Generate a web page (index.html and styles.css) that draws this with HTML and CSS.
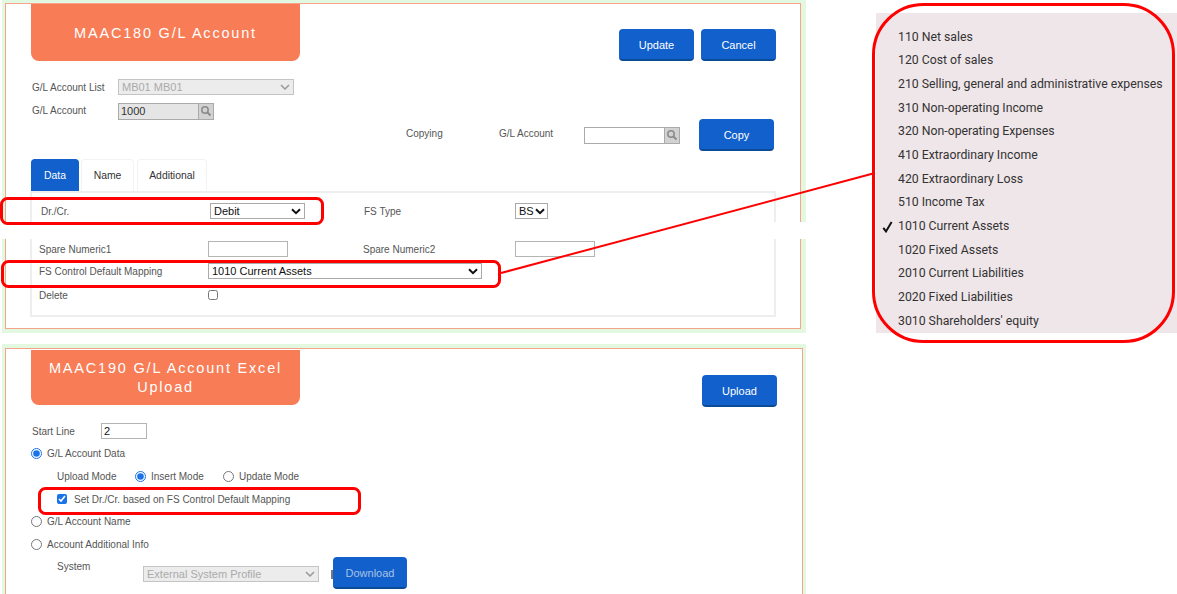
FILE: index.html
```html
<!DOCTYPE html>
<html lang="en">
<head>
    <meta charset="UTF-8">
    <meta name="viewport" content="width=device-width, initial-scale=1.0">
    <title>G/L Account screens</title>
    <link rel="stylesheet" href="styles.css">
</head>
<body>
    <div class="page">
        <div class="screens">
            <section class="screen screen-account">
                <div class="screen-inner">
                    <div class="head">
                        <h1 class="title">MAAC180 G/L Account</h1>
                        <div class="actions">
                            <button class="button">Update</button>
                            <button class="button">Cancel</button>
                        </div>
                    </div>
                    <div class="row row-list">
                        <label class="label label-list">G/L Account List</label>
                        <div class="select select-disabled select-list"><span>MB01 MB01</span>
                            <svg class="chevron" width="10" height="6" viewBox="0 0 10 6"><path d="M1 1l4 4 4-4" fill="none" stroke="#999" stroke-width="1.5"/></svg>
                        </div>
                    </div>
                    <div class="row row-account">
                        <label class="label label-list label-nudge">G/L Account</label>
                        <div class="lookup lookup-readonly">
                            <input class="lookup-input" type="text" value="1000">
                            <span class="lookup-button">
                                <svg width="12" height="12" viewBox="0 0 12 12"><circle cx="5" cy="5" r="3.2" fill="none" stroke="#8b8b8b" stroke-width="1.5"/><path d="M7.5 7.5l3 3" stroke="#8b8b8b" stroke-width="2"/></svg>
                            </span>
                        </div>
                    </div>
                    <div class="row row-copy">
                        <label class="label label-copying label-up">Copying</label>
                        <label class="label label-copy-account label-up">G/L Account</label>
                        <div class="lookup">
                            <input class="lookup-input" type="text">
                            <span class="lookup-button">
                                <svg width="12" height="12" viewBox="0 0 12 12"><circle cx="5" cy="5" r="3.2" fill="none" stroke="#8b8b8b" stroke-width="1.5"/><path d="M7.5 7.5l3 3" stroke="#8b8b8b" stroke-width="2"/></svg>
                            </span>
                        </div>
                        <button class="button button-copy">Copy</button>
                    </div>
                    <div class="tabs">
                        <span class="tab tab-active tab-data">Data</span>
                        <span class="tab tab-name">Name</span>
                        <span class="tab tab-additional">Additional</span>
                    </div>
                    <div class="tab-box">
                        <div class="row row-drcr">
                            <label class="label label-drcr">Dr./Cr.</label>
                            <div class="select select-drcr"><span>Debit</span>
                                <svg class="chevron" width="10" height="7" viewBox="0 0 10 7"><path d="M1 1.2l4 4 4-4" fill="none" stroke="#111" stroke-width="2"/></svg>
                            </div>
                            <label class="label label-fstype">FS Type</label>
                            <div class="select select-bs"><span>BS</span>
                                <svg class="chevron" width="10" height="7" viewBox="0 0 10 7"><path d="M1 1.2l4 4 4-4" fill="none" stroke="#111" stroke-width="2"/></svg>
                            </div>
                        </div>
                        <div class="row row-spare">
                            <label class="label label-form">Spare Numeric1</label>
                            <input class="input input-spare" type="text">
                            <label class="label label-spare2">Spare Numeric2</label>
                            <input class="input input-spare" type="text">
                        </div>
                        <div class="row row-mapping">
                            <label class="label label-form">FS Control Default Mapping</label>
                            <div class="select select-mapping"><span>1010 Current Assets</span>
                                <svg class="chevron" width="10" height="7" viewBox="0 0 10 7"><path d="M1 1.2l4 4 4-4" fill="none" stroke="#111" stroke-width="2"/></svg>
                            </div>
                        </div>
                        <div class="row row-delete">
                            <label class="label label-form">Delete</label>
                            <input class="check check-delete" type="checkbox">
                        </div>
                    </div>
                </div>
            </section>

            <section class="screen screen-upload">
                <div class="screen-inner">
                    <div class="head">
                        <h1 class="title">MAAC190 G/L Account Excel Upload</h1>
                        <div class="actions">
                            <button class="button">Upload</button>
                        </div>
                    </div>
                    <div class="row row-start">
                        <label class="label label-start">Start Line</label>
                        <input class="input input-start" type="text" value="2">
                    </div>
                    <div class="options">
                        <div class="row">
                            <input class="radio" type="radio" name="kind" checked>
                            <label class="label">G/L Account Data</label>
                        </div>
                        <div class="row row-indent">
                            <label class="label label-mode">Upload Mode</label>
                            <input class="radio" type="radio" name="mode" checked>
                            <label class="label label-insert">Insert Mode</label>
                            <input class="radio" type="radio" name="mode">
                            <label class="label">Update Mode</label>
                        </div>
                        <div class="row row-indent">
                            <input class="check check-drcr" type="checkbox" checked>
                            <label class="label">Set Dr./Cr. based on FS Control Default Mapping</label>
                        </div>
                        <div class="row row-tight">
                            <input class="radio" type="radio" name="kind">
                            <label class="label">G/L Account Name</label>
                        </div>
                        <div class="row">
                            <input class="radio" type="radio" name="kind">
                            <label class="label">Account Additional Info</label>
                        </div>
                        <div class="row row-indent row-system">
                            <label class="label label-system">System</label>
                            <div class="select select-disabled select-system"><span>External System Profile</span>
                                <svg class="chevron" width="10" height="6" viewBox="0 0 10 6"><path d="M1 1l4 4 4-4" fill="none" stroke="#999" stroke-width="1.5"/></svg>
                            </div>
                            <span class="sliver"></span>
                            <button class="button button-download">Download</button>
                        </div>
                    </div>
                </div>
            </section>
        </div>

        <ul class="menu">
            <li>110 Net sales</li>
            <li>120 Cost of sales</li>
            <li>210 Selling, general and administrative expenses</li>
            <li>310 Non-operating Income</li>
            <li>320 Non-operating Expenses</li>
            <li>410 Extraordinary Income</li>
            <li>420 Extraordinary Loss</li>
            <li>510 Income Tax</li>
            <li class="menu-checked">
                <svg class="menu-tick" width="11" height="12" viewBox="0 0 11 12"><path d="M1.3 6.8l2.7 3.6L9.6 1" fill="none" stroke="#111" stroke-width="2"/></svg>
                1010 Current Assets
            </li>
            <li>1020 Fixed Assets</li>
            <li>2010 Current Liabilities</li>
            <li>2020 Fixed Liabilities</li>
            <li>3010 Shareholders' equity</li>
        </ul>

        <!-- gap left where the screenshot was cut -->
        <div class="cut"></div>

        <!-- red callouts drawn over the screenshots -->
        <svg class="callouts" width="1177" height="594" viewBox="0 0 1177 594">
            <g fill="none" stroke="#f00" stroke-width="3">
                <rect x="1.5" y="198.5" width="321" height="25" rx="6"/>
                <rect x="2.5" y="261.5" width="497" height="25" rx="6"/>
                <rect x="39.5" y="488.5" width="320" height="25" rx="6"/>
                <rect x="873.5" y="4.5" width="300" height="337" rx="50"/>
            </g>
            <path d="M501 273L875 173" stroke="#f00" stroke-width="2"/>
        </svg>
    </div>
</body>
</html>
```

FILE: styles.css
```css
* {
    box-sizing: border-box;
}
body {
    margin: 0;
    background-color: #fff;
    font-family: "Liberation Sans", Arial, sans-serif;
    font-size: 10px;
    color: #555;
    overflow: hidden;
}
.page {
    position: relative;
    display: flex;
    align-items: flex-start;
    width: 1177px;
    height: 594px;
    overflow: hidden;
}
.screens {
    display: flex;
    flex-direction: column;
    width: 804px;
    margin-left: 2px;
    flex-shrink: 0;
}
.screen {
    background-color: #e3f8e0;
    padding: 3px 5px 4px 3px;
}
.screen-account {
    height: 333px;
}
.screen-upload {
    height: 260px;
    margin-top: 11px;
    padding: 4px 3px 0 3px;
}
.screen-inner {
    height: 100%;
    background-color: #fff;
    border: 1px solid #f6a58c;
    padding: 0 24px 0 25px;
}
.screen-upload .screen-inner {
    padding: 1px 25px 0 25px;
}

/* header */
.head {
    display: flex;
    justify-content: space-between;
    align-items: flex-start;
    height: 57px;
}
.screen-upload .head {
    height: 55px;
}
.title {
    display: flex;
    align-items: center;
    justify-content: center;
    width: 269px;
    height: 100%;
    margin: 0;
    padding: 0 10px;
    background-color: #f87c56;
    border-radius: 0 0 8px 8px;
    color: #fff;
    font-size: 14.5px;
    font-weight: normal;
    letter-spacing: 1.8px;
    line-height: 19px;
    text-align: center;
}
.screen-account .title {
    padding-top: 2px;
}
.actions {
    display: flex;
    gap: 7px;
    margin-top: 25px;
}
.button {
    width: 75px;
    height: 32px;
    padding: 2px 0 0;
    background-color: #1160cc;
    border: none;
    border-bottom: 2px solid #0b4a96;
    border-radius: 4px;
    color: #fff;
    font-family: inherit;
    font-size: 11px;
}

/* form rows */
.row {
    display: flex;
    align-items: center;
    height: 16px;
}
.label {
    white-space: nowrap;
}
.label-up {
    position: relative;
    top: -2px;
}
.label-nudge {
    position: relative;
    top: -1px;
}
.label-list {
    width: 87px;
    padding-left: 1px;
}
.row-list {
    margin-top: 18px;
}
.row-account {
    margin-top: 8px;
}
.row-copy {
    height: 32px;
    padding-left: 375px;
}
.label-copying {
    width: 93px;
}
.label-copy-account {
    width: 85px;
}
.button-copy {
    margin-left: 19px;
}

.select {
    display: flex;
    align-items: center;
    justify-content: space-between;
    height: 16px;
    padding: 0 3px;
    background-color: #fff;
    border: 1px solid #aaa;
    color: #111;
    font-size: 11px;
}
.select-disabled {
    background-color: #ececec;
    border-color: #c4c4c4;
    color: #aaa;
}
.select-list {
    width: 176px;
}
.select-drcr {
    width: 95px;
}
.select-bs {
    width: 33px;
    padding-right: 2px;
}
.select-mapping {
    width: 274px;
}
.select-system {
    width: 176px;
}
.input {
    height: 16px;
    padding: 0 2px;
    background-color: #fff;
    border: 1px solid #b4b4b4;
    font-family: inherit;
    font-size: 11px;
    color: #111;
}
.lookup {
    display: flex;
    width: 96px;
    height: 17px;
}
.lookup-input {
    width: 80px;
    height: 100%;
    padding: 0 2px;
    background-color: #fff;
    border: 1px solid #aaa;
    border-right: none;
    font-family: inherit;
    font-size: 11px;
    color: #333;
}
.lookup-readonly .lookup-input {
    background-color: #e5e5e5;
}
.lookup-button {
    display: flex;
    align-items: center;
    justify-content: center;
    width: 16px;
    height: 100%;
    background-color: #d2d2d2;
    border: 1px solid #aaa;
}

/* tabs */
.tabs {
    display: flex;
    gap: 2px;
    height: 32px;
    margin-top: 8px;
}
.tab {
    display: flex;
    align-items: center;
    justify-content: center;
    background-color: #fff;
    border: 1px solid #f3f3f3;
    border-bottom: none;
    border-radius: 4px 4px 0 0;
    color: #333;
    font-size: 10.4px;
}
.tab-active {
    background-color: #1160cc;
    border-color: #1160cc;
    color: #fff;
}
.tab-data {
    width: 48px;
}
.tab-name {
    width: 53px;
}
.tab-additional {
    width: 70px;
    margin-left: 1px;
}
.tab-box {
    width: 746px;
    height: 126px;
    margin-left: -1px;
    padding: 0 0 0 7px;
    border: 2px solid #eee;
}
.label-form {
    width: 169px;
}
.row-drcr {
    margin-top: 10px;
}
.label-drcr {
    width: 171px;
    padding-left: 2px;
}
.label-fstype {
    width: 210px;
    padding-left: 59px;
}
.row-spare {
    margin-top: 22px;
}
.label-spare2 {
    width: 227px;
    padding-left: 75px;
}
.input-spare {
    width: 80px;
}
.row-mapping {
    margin-top: 6px;
}
.row-delete {
    margin-top: 8px;
}

/* checks and radios */
.radio,
.check {
    flex-shrink: 0;
    margin: 0;
    accent-color: #1a73e8;
}
.radio {
    width: 11px;
    height: 11px;
    margin-right: 5px;
}
.check-delete {
    width: 10px;
    height: 10px;
}
.check-drcr {
    width: 10px;
    height: 10px;
    margin-right: 7px;
}

/* upload screen */
.row-start {
    margin-top: 18px;
}
.label-start {
    width: 70px;
    padding-left: 1px;
}
.input-start {
    width: 46px;
}
.options {
    display: flex;
    flex-direction: column;
    gap: 7px;
    margin-top: 6px;
}
.row-indent {
    padding-left: 26px;
}
.row-tight {
    margin-top: -1px;
}
.label-mode {
    width: 78px;
}
.label-insert {
    width: 72px;
}
.label-system {
    width: 86px;
}
.row-system {
    height: 32px;
    margin-top: -2px;
    align-items: flex-start;
}
.row-system .label-system {
    padding-top: 4px;
}
.select-system {
    margin-top: 9px;
}
.sliver {
    width: 2px;
    height: 9px;
    margin: 13px 0 0 12px;
    background-color: #777;
}
.button-download {
    width: 74px;
    color: #a9c2e4;
}

/* dropdown picture */
.menu {
    flex-shrink: 0;
    width: 301px;
    height: 320px;
    margin: 13px 0 0 70px;
    padding: 12px 0 0 22px;
    background-color: #efe6e9;
    font-family: Roboto, sans-serif;
    font-size: 12.27px;
    color: #333;
    list-style: none;
}
.menu li {
    display: flex;
    align-items: center;
    position: relative;
    height: 23.67px;
    white-space: nowrap;
}
.menu-tick {
    position: absolute;
    left: -16px;
    top: 7px;
}

/* overlays */
.cut {
    position: absolute;
    left: 0;
    top: 222px;
    width: 830px;
    height: 17px;
    background-color: #fff;
}
.callouts {
    position: absolute;
    left: 0;
    top: 0;
}
```
